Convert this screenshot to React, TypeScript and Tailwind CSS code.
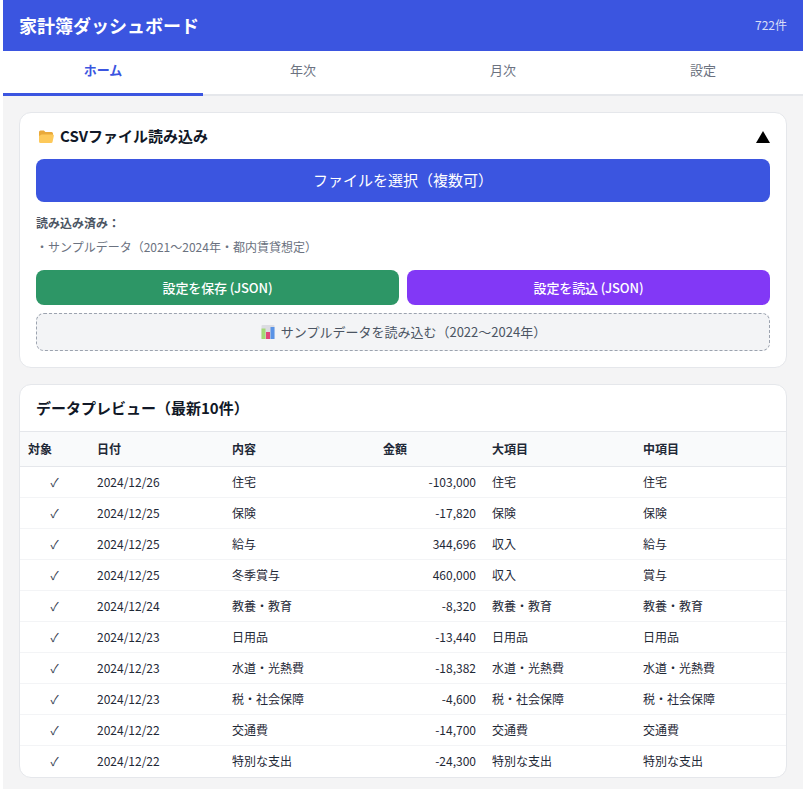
const rows = [
  ["2024/12/26", "住宅", "-103,000", "住宅", "住宅"],
  ["2024/12/25", "保険", "-17,820", "保険", "保険"],
  ["2024/12/25", "給与", "344,696", "収入", "給与"],
  ["2024/12/25", "冬季賞与", "460,000", "収入", "賞与"],
  ["2024/12/24", "教養・教育", "-8,320", "教養・教育", "教養・教育"],
  ["2024/12/23", "日用品", "-13,440", "日用品", "日用品"],
  ["2024/12/23", "水道・光熱費", "-18,382", "水道・光熱費", "水道・光熱費"],
  ["2024/12/23", "税・社会保障", "-4,600", "税・社会保障", "税・社会保障"],
  ["2024/12/22", "交通費", "-14,700", "交通費", "交通費"],
  ["2024/12/22", "特別な支出", "-24,300", "特別な支出", "特別な支出"],
];

function FolderIcon() {
  return (
    <svg width="15" height="13" viewBox="0 0 15 13" className="shrink-0">
      <path d="M0 2a1.5 1.5 0 0 1 1.5-1.5h3.4l1.5 1.5h6A1.5 1.5 0 0 1 14 3.5V6H0z" fill="#e9a93a" />
      <path d="M2.6 4.5h10.9a1.3 1.3 0 0 1 1.3 1.6l-1.2 5.6a1.5 1.5 0 0 1-1.5 1.3H1.5A1.5 1.5 0 0 1 0 11.5V6z" fill="#fdc95a" />
    </svg>
  );
}

function ChartIcon() {
  return (
    <svg width="14" height="14" viewBox="0 0 14 14" className="shrink-0">
      <rect x="0.5" y="0" width="13" height="14" rx="1" fill="#dcdce2" />
      <rect x="0.5" y="3.5" width="4" height="10.5" fill="#a3d977" />
      <rect x="5" y="7" width="4" height="7" fill="#e0457b" />
      <rect x="9.5" y="2" width="4" height="12" fill="#5a93e6" />
    </svg>
  );
}

export default function App() {
  return (
    <div className="mx-auto min-h-[789px] w-[800px] bg-[#f4f4f5] font-['Noto_Sans_CJK_JP','Noto_Sans',sans-serif] text-[#1f2937]">
      <header className="flex h-[51px] items-center justify-between bg-[#3b55e0] px-4 pb-0.5 text-white">
        <h1 className="text-lg font-bold">家計簿ダッシュボード</h1>
        <span className="text-xs opacity-80">722件</span>
      </header>
      <nav className="flex h-[45px] border-b-2 border-[#e5e7eb] bg-white text-[13px]">
        <div className="-mb-0.5 flex h-[45px] flex-1 items-center justify-center border-b-[3px] border-[#3b55e0] pb-1 font-bold text-[#3b55e0]">ホーム</div>
        <div className="flex flex-1 items-center justify-center pb-1.5 text-[#6b7280]">年次</div>
        <div className="flex flex-1 items-center justify-center pb-1.5 text-[#6b7280]">月次</div>
        <div className="flex flex-1 items-center justify-center pb-1.5 text-[#6b7280]">設定</div>
      </nav>
      <main className="flex flex-col gap-4 p-4">
        <section className="rounded-xl border border-[#e5e7eb] bg-white px-4 pb-4 pt-[13px]">
          <div className="flex h-[22px] items-center justify-between">
            <h2 className="flex items-center gap-[6px] pb-0.5 pl-[3px] text-[15px] font-bold text-[#111827]"><FolderIcon />CSVファイル読み込み</h2>
            <svg width="14" height="12" viewBox="0 0 14 12"><path d="M7 0 14 12H0z" fill="#000" /></svg>
          </div>
          <button className="mt-[11px] flex h-[43px] w-full items-center justify-center rounded-lg bg-[#3b55e0] text-[15px] font-normal text-white">ファイルを選択（複数可）</button>
          <p className="mt-[13px] text-xs font-bold leading-4 text-[#4b5563]">読み込み済み：</p>
          <p className="mt-2 text-xs leading-4 text-[#6b7280]">・サンプルデータ（2021〜2024年・都内賃貸想定）</p>
          <div className="mt-[15px] grid grid-cols-2 gap-2">
            <button className="flex h-[35px] items-center justify-center rounded-lg bg-[#2d9666] text-[13px] font-medium tracking-[-0.15px] text-white">設定を保存 (JSON)</button>
            <button className="flex h-[35px] items-center justify-center rounded-lg bg-[#8238f6] text-[13px] font-medium tracking-[-0.15px] text-white">設定を読込 (JSON)</button>
          </div>
          <button className="mt-2 flex h-[38px] w-full items-center justify-center gap-[6px] rounded-lg border border-dashed border-[#9ca3af] bg-[#f3f4f6] pl-px text-[13px] text-[#4b5563]"><ChartIcon />サンプルデータを読み込む（2022〜2024年）</button>
        </section>
        <section className="overflow-hidden rounded-xl border border-[#e5e7eb] bg-white">
          <h2 className="flex h-[46px] items-center px-4 text-[15px] font-bold text-[#111827]">データプレビュー（最新10件）</h2>
          <table className="w-full table-fixed border-collapse text-xs">
            <thead>
              <tr className="h-[35px] border-y border-[#e5e7eb] bg-[#f9fafb] text-left text-[#1f2937]">
                <th className="w-[69px] pl-2 font-bold">対象</th>
                <th className="w-[135px] pl-2 font-bold">日付</th>
                <th className="w-[151px] pl-2 font-bold">内容</th>
                <th className="w-[109px] pl-2 font-bold">金額</th>
                <th className="w-[151px] pl-2 font-bold">大項目</th>
                <th className="pl-2 font-bold">中項目</th>
              </tr>
            </thead>
            <tbody>
              {rows.map((r, i) => (
                <tr key={i} className="h-[31px] border-b border-[#f3f4f6] last:border-b-0">
                  <td className="text-center text-[#374151]">✓</td>
                  <td className="pl-2">{r[0]}</td>
                  <td className="pl-2">{r[1]}</td>
                  <td className="pr-2 text-right">{r[2]}</td>
                  <td className="pl-2">{r[3]}</td>
                  <td className="pl-2">{r[4]}</td>
                </tr>
              ))}
            </tbody>
          </table>
        </section>
      </main>
    </div>
  );
}
